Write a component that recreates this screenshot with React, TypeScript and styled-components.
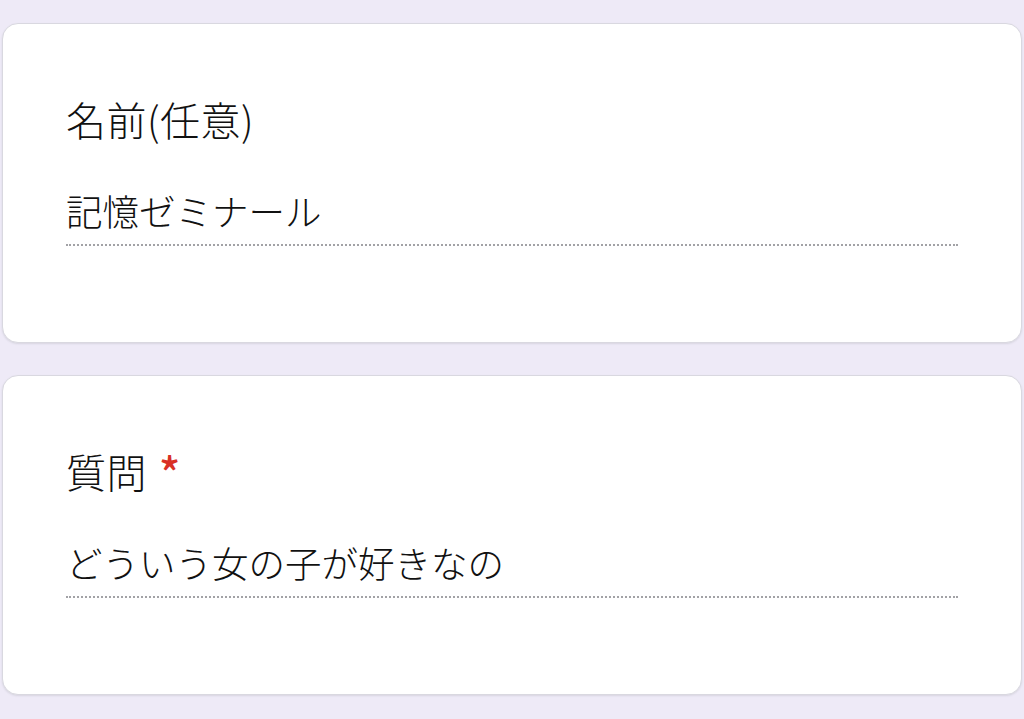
import React from 'react';
import styled, { createGlobalStyle } from 'styled-components';

const GlobalStyle = createGlobalStyle`
  html, body {
    margin: 0;
    padding: 0;
    background: #eeeaf7;
  }
  body {
    font-family: 'Noto Sans CJK JP', 'Noto Sans', sans-serif;
    color: #111111;
  }
`;

const questions = [
  { title: '名前(任意)', answer: '記憶ゼミナール', required: false },
  { title: '質問', answer: 'どういう女の子が好きなの', required: true },
];

function App() {
  return (
    <>
      <GlobalStyle />
      <StPage>
        {questions.map((q) => (
          <StCard key={q.title}>
            <StTitle>
              {q.title}
              {q.required && <StRequired>*</StRequired>}
            </StTitle>
            <StAnswer>{q.answer}</StAnswer>
          </StCard>
        ))}
      </StPage>
    </>
  );
}

export default App;

const StPage = styled.div`
  display: flex;
  flex-direction: column;
  gap: 32px;
  padding: 23px 2px 24px;
`;

const StCard = styled.div`
  background: #ffffff;
  border: 1px solid #d9d8e0;
  border-radius: 16px;
  box-shadow: 0 1px 2px rgba(60, 64, 67, 0.12);
  padding: 71px 63px 96px;
  display: flex;
  flex-direction: column;
`;

const StTitle = styled.div`
  font-size: 40px;
  font-weight: 300;
  line-height: 48px;
  letter-spacing: 0.5px;
  display: flex;
  align-items: flex-start;
`;

const StRequired = styled.span`
  color: #d93025;
  margin-left: 12px;
  font-size: 44px;
  font-weight: 500;
  line-height: 48px;
`;

const StAnswer = styled.div`
  margin-top: 46px;
  font-size: 36.5px;
  font-weight: 300;
  line-height: 44px;
  padding-bottom: 11px;
  border-bottom: 2px dotted #a2a2a6;
`;
